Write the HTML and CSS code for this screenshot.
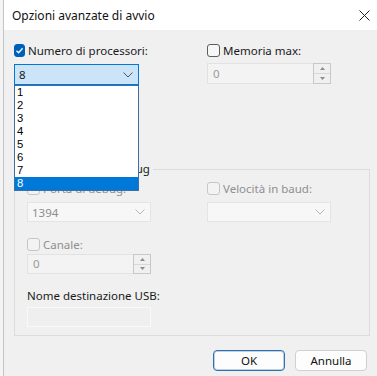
FILE: index.html
```html
<!DOCTYPE html>
<html lang="it">
<head>
  <meta charset="UTF-8" />
  <title>Opzioni avanzate di avvio</title>
  <link rel="stylesheet" href="styles.css">
</head>
<body>
  <div class="screen">
    <div class="behind"></div>

    <div class="dialog">
      <header class="titlebar">
        <span class="title">Opzioni avanzate di avvio</span>
        <svg class="close" width="11" height="11" viewBox="0 0 11 11">
          <path d="M0.5 0.5 L10.5 10.5 M10.5 0.5 L0.5 10.5" />
        </svg>
      </header>

      <div class="content">
        <div class="cols top-cols">
          <div class="field">
            <label class="check">
              <span class="box checked">
                <svg width="9" height="9" viewBox="0 0 9 9"><path d="M1.5 4.8 L3.6 6.8 L7.6 2.2" /></svg>
              </span>
              Numero di processori:
            </label>
            <div class="combo-wrap">
              <div class="combo open">
                <span>8</span>
                <svg class="chev" width="10" height="6" viewBox="0 0 10 6"><path d="M0.5 0.5 L5 5 L9.5 0.5" /></svg>
              </div>
              <ul class="droplist">
                <li>1</li><li>2</li><li>3</li><li>4</li>
                <li>5</li><li>6</li><li>7</li><li class="selected">8</li>
              </ul>
            </div>
          </div>

          <div class="field">
            <label class="check">
              <span class="box"></span>
              Memoria max:
            </label>
            <div class="spin">
              <span class="spin-text">0</span>
              <div class="spin-btns">
                <span class="spin-btn"><svg width="5" height="3" viewBox="0 0 5 3"><path d="M0 3 L2.5 0 L5 3 Z" /></svg></span>
                <span class="spin-btn"><svg width="5" height="3" viewBox="0 0 5 3"><path d="M0 0 L2.5 3 L5 0 Z" /></svg></span>
              </div>
            </div>
          </div>
        </div>

        <fieldset class="group">
          <legend><span class="legend-text">debug</span></legend>
          <div class="cols group-cols">
            <div class="field">
              <label class="check disabled"><span class="box"></span>Porta di debug:</label>
              <div class="combo off">
                <span>1394</span>
                <svg class="chev" width="10" height="6" viewBox="0 0 10 6"><path d="M0.5 0.5 L5 5 L9.5 0.5" /></svg>
              </div>
            </div>
            <div class="field">
              <label class="check disabled"><span class="box"></span>Velocità in baud:</label>
              <div class="combo off">
                <span></span>
                <svg class="chev" width="10" height="6" viewBox="0 0 10 6"><path d="M0.5 0.5 L5 5 L9.5 0.5" /></svg>
              </div>
            </div>
          </div>

          <div class="field channel">
            <label class="check disabled"><span class="box"></span>Canale:</label>
            <div class="spin small">
              <span class="spin-text">0</span>
              <div class="spin-btns">
                <span class="spin-btn"><svg width="5" height="3" viewBox="0 0 5 3"><path d="M0 3 L2.5 0 L5 3 Z" /></svg></span>
                <span class="spin-btn"><svg width="5" height="3" viewBox="0 0 5 3"><path d="M0 0 L2.5 3 L5 0 Z" /></svg></span>
              </div>
            </div>
          </div>

          <div class="field usb">
            <span class="plain-label">Nome destinazione USB:</span>
            <div class="textbox"></div>
          </div>
        </fieldset>

        <div class="buttons">
          <button class="btn primary">OK</button>
          <button class="btn">Annulla</button>
        </div>
      </div>
    </div>
  </div>
</body>
</html>
```

FILE: styles.css
```css
body { margin: 0; font-family: "Noto Sans", "Open Sans", sans-serif; font-size: 11.5px; color: #1a1a1a; }
.screen { display: flex; width: 377px; height: 376px; overflow: hidden; }
.behind { width: 3px; background: #f4f4f4; }
.dialog { flex: 1; display: flex; flex-direction: column; border-left: 1px solid #c4c4c4; background: #f0f0f0; }

.titlebar {
  height: 30px; background: #fff; display: flex; align-items: center;
  justify-content: space-between; padding: 0 7px 0 8px;
}
.title { font-size: 12px; color: #111; }
.close path { stroke: #222; stroke-width: 1; fill: none; }

.content { flex: 1; padding: 14px 7px 0 10px; }
.cols { display: grid; }
.top-cols { grid-template-columns: 125px 124px; column-gap: 68px; }
.group-cols { grid-template-columns: 124px 124px; column-gap: 56px; }
.field { display: flex; flex-direction: column; }

.check { display: flex; align-items: center; gap: 3px; height: 13px; line-height: 13px; white-space: nowrap; }
.box {
  width: 11px; height: 11px; border: 1px solid #5d5d5d; border-radius: 3px;
  background: #f7f7f7; display: flex; align-items: center; justify-content: center;
}
.box.checked { background: #005fb8; border-color: #005fb8; }
.box.checked path { stroke: #fff; stroke-width: 1.3; fill: none; }
.check.disabled { color: #8f8f8f; }
.check.disabled .box { border-color: #c6c6c6; background: #f3f3f3; }

.combo-wrap { position: relative; margin-top: 7px; }
.combo {
  height: 19px; border: 1px solid #cfcfcf; background: #fff;
  display: flex; align-items: center; justify-content: space-between; padding: 0 5px 0 4px;
}
.combo.open { background: #cce4f7; border-color: #0078d7; }
.chev path { stroke: #555; stroke-width: 1; fill: none; }
.combo.off { margin-top: 7px; height: 18px; background: #f7f7f7; border-color: #e4e4e4; color: #8d8d8d; }
.combo.off .chev path { stroke: #b5b5b5; }

.droplist {
  position: absolute; top: 21px; left: 0; width: 123px; margin: 0; padding: 0;
  list-style: none; background: #fff; border: 1px solid #3d6fa3; z-index: 2;
}
.droplist li {
  height: 13px; line-height: 13px; padding-left: 2px; color: #000;
  font-family: "Liberation Sans", Arial, sans-serif; font-size: 11.3px;
}
.droplist li.selected { background: #0078d7; color: #fff; }

.spin { display: flex; height: 21px; margin-top: 6px; }
.spin-text {
  flex: 1; border: 1px solid #e2e2e2; border-right: none; background: #f3f3f3;
  color: #9a9a9a; padding-left: 5px; line-height: 19px;
}
.spin-btns { width: 16px; display: flex; flex-direction: column; border: 1px solid #c8c8c8; }
.spin-btn { flex: 1; display: flex; align-items: center; justify-content: center; background: #f0f0f0; }
.spin-btn + .spin-btn { border-top: 1px solid #d8d8d8; }
.spin-btn path { fill: #8c8c8c; }
.spin.small { width: 124px; height: 20px; margin-top: 3px; }
.spin.small .spin-text { line-height: 18px; }

/* space where the list covers the PCI / debug checkboxes */
.group {
  margin: 77px 0 0; border: 1px solid #dcdcdc; padding: 6px 0 8px 12px; min-width: 0;
}
.group legend { padding: 0 3px 0 0; margin-left: 88px; line-height: 14px; }
.channel { margin-top: 16px; }
.usb { margin-top: 15px; }
.plain-label { line-height: 14px; }
.textbox { width: 122px; height: 18px; margin-top: 4px; border: 1px solid #f9f9f9; background: #efefef; }

.buttons { display: flex; justify-content: flex-end; gap: 10px; margin: 14px 3px 0 0; }
.btn {
  width: 72px; height: 21px; padding: 0; font: inherit; color: #111;
  background: #fdfdfd; border: 1px solid #d0d0d0; border-radius: 4px;
}
.btn.primary { border-color: #2f6fad; box-shadow: inset 0 0 0 1px rgba(47, 111, 173, 0.3); }
```
